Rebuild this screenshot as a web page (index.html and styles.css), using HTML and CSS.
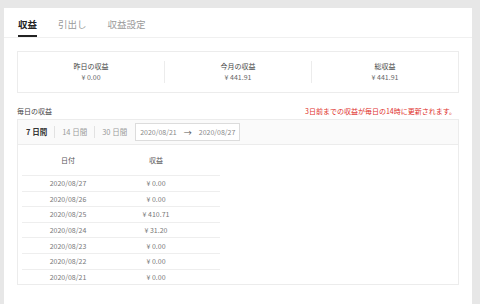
FILE: index.html
```html
<!DOCTYPE html>
<html>
	<head>
		<meta charset="utf-8">
		<title>収益</title>
		<link rel="stylesheet" href="styles.css">
	</head>

	<body>
		<div class="panel">
			<div class="tabs">
				<span class="tab active">収益</span>
				<span class="tab">引出し</span>
				<span class="tab">収益設定</span>
			</div>

			<div class="content">
				<div class="summary">
					<div class="stat">
						<div class="stat-label">昨日の収益</div>
						<div class="stat-value">¥ 0.00</div>
					</div>
					<div class="stat">
						<div class="stat-label">今月の収益</div>
						<div class="stat-value">¥ 441.91</div>
					</div>
					<div class="stat">
						<div class="stat-label">総収益</div>
						<div class="stat-value">¥ 441.91</div>
					</div>
				</div>

				<div class="daily-head">
					<span class="daily-title">毎日の収益</span>
					<span class="notice">3日前までの収益が毎日の14時に更新されます。</span>
				</div>

				<div class="daily">
					<div class="filter">
						<span class="range active">7 日間</span>
						<span class="range">14 日間</span>
						<span class="range">30 日間</span>
						<div class="datebox">
							<span>2020/08/21</span>
							<span class="arrow">→</span>
							<span>2020/08/27</span>
						</div>
					</div>

					<table class="rows">
						<thead>
							<tr><th>日付</th><th>収益</th><th></th></tr>
						</thead>
						<tbody>
							<tr><td>2020/08/27</td><td>¥ 0.00</td><td></td></tr>
							<tr><td>2020/08/26</td><td>¥ 0.00</td><td></td></tr>
							<tr><td>2020/08/25</td><td>¥ 410.71</td><td></td></tr>
							<tr><td>2020/08/24</td><td>¥ 31.20</td><td></td></tr>
							<tr><td>2020/08/23</td><td>¥ 0.00</td><td></td></tr>
							<tr><td>2020/08/22</td><td>¥ 0.00</td><td></td></tr>
							<tr><td>2020/08/21</td><td>¥ 0.00</td><td></td></tr>
						</tbody>
					</table>
				</div>
			</div>
		</div>
	</body>
</html>
```

FILE: styles.css
```css
:root {
	--bg: #e7e7e7;
	--line: #ececec;
	--text: #444444;
	--muted: #9a9a9a;
	--red: #e0302a;
}

html, body {
	height: 100%;
}

body {
	margin: 0;
	padding: 8px 8px 0 4px;
	box-sizing: border-box;
	background-color: var(--bg);
	font-family: "Noto Sans CJK JP", "Noto Sans", sans-serif;
	font-size: 7px;
	color: var(--text);
}

.panel {
	background-color: #fff;
	height: 100%;
}

.tabs {
	display: flex;
	gap: 21px;
	padding-left: 14px;
	height: 29px;
	border-bottom: 1px solid #f0f0f0;
}

.tab {
	font-size: 9.5px;
	line-height: 13px;
	padding-top: 10px;
	height: 17px;
	color: var(--muted);
	border-bottom: 2px solid transparent;
}

.tab.active {
	font-weight: bold;
	color: #222;
	border-bottom-color: #222;
}

.content {
	padding: 13px 13px 0 13px;
}

.summary {
	display: flex;
	align-items: center;
	height: 40px;
	border: 1px solid var(--line);
}

.stat {
	flex: 1;
	text-align: center;
	line-height: 11px;
	border-left: 1px solid var(--line);
}

.stat:first-child {
	border-left: none;
}

.stat-value {
	color: #666;
}

.daily-head {
	display: flex;
	justify-content: space-between;
	padding: 13px 3px 0 0;
	height: 13px;
	line-height: 10px;
}

.notice {
	color: var(--red);
}

.daily {
	border: 1px solid var(--line);
	height: 164px;
}

.filter {
	display: flex;
	align-items: center;
	height: 24px;
	padding-left: 8px;
	background-color: #fafafa;
	border-bottom: 1px solid var(--line);
	font-size: 7.5px;
}

.range {
	color: var(--muted);
	padding: 0 7px;
	line-height: 12px;
	border-left: 1px solid #e2e2e2;
}

.range:first-child {
	padding-left: 0;
	border-left: none;
}

.range.active {
	color: #333;
	font-weight: bold;
}

.datebox {
	display: flex;
	align-items: center;
	gap: 7px;
	margin-left: 1px;
	height: 16px;
	padding: 0 4px;
	background-color: #fff;
	border: 1px solid #dcdcdc;
	color: #888;
	font-size: 7px;
}

.arrow {
	color: #555;
	font-size: 8px;
}

.rows {
	border-collapse: collapse;
	margin-left: 4px;
	width: 198px;
	color: #777;
}

.rows th, .rows td {
	padding: 0;
	text-align: center;
	font-weight: normal;
	border-bottom: 1px solid #eeeeee;
}

.rows th {
	height: 30px;
	color: #555;
}

.rows td {
	height: 14.6px;
}

.rows th:first-child {
	width: 92px;
}

.rows th:nth-child(2) {
	width: 84px;
}

.rows tbody tr:last-child td {
	border-bottom: none;
}
```
